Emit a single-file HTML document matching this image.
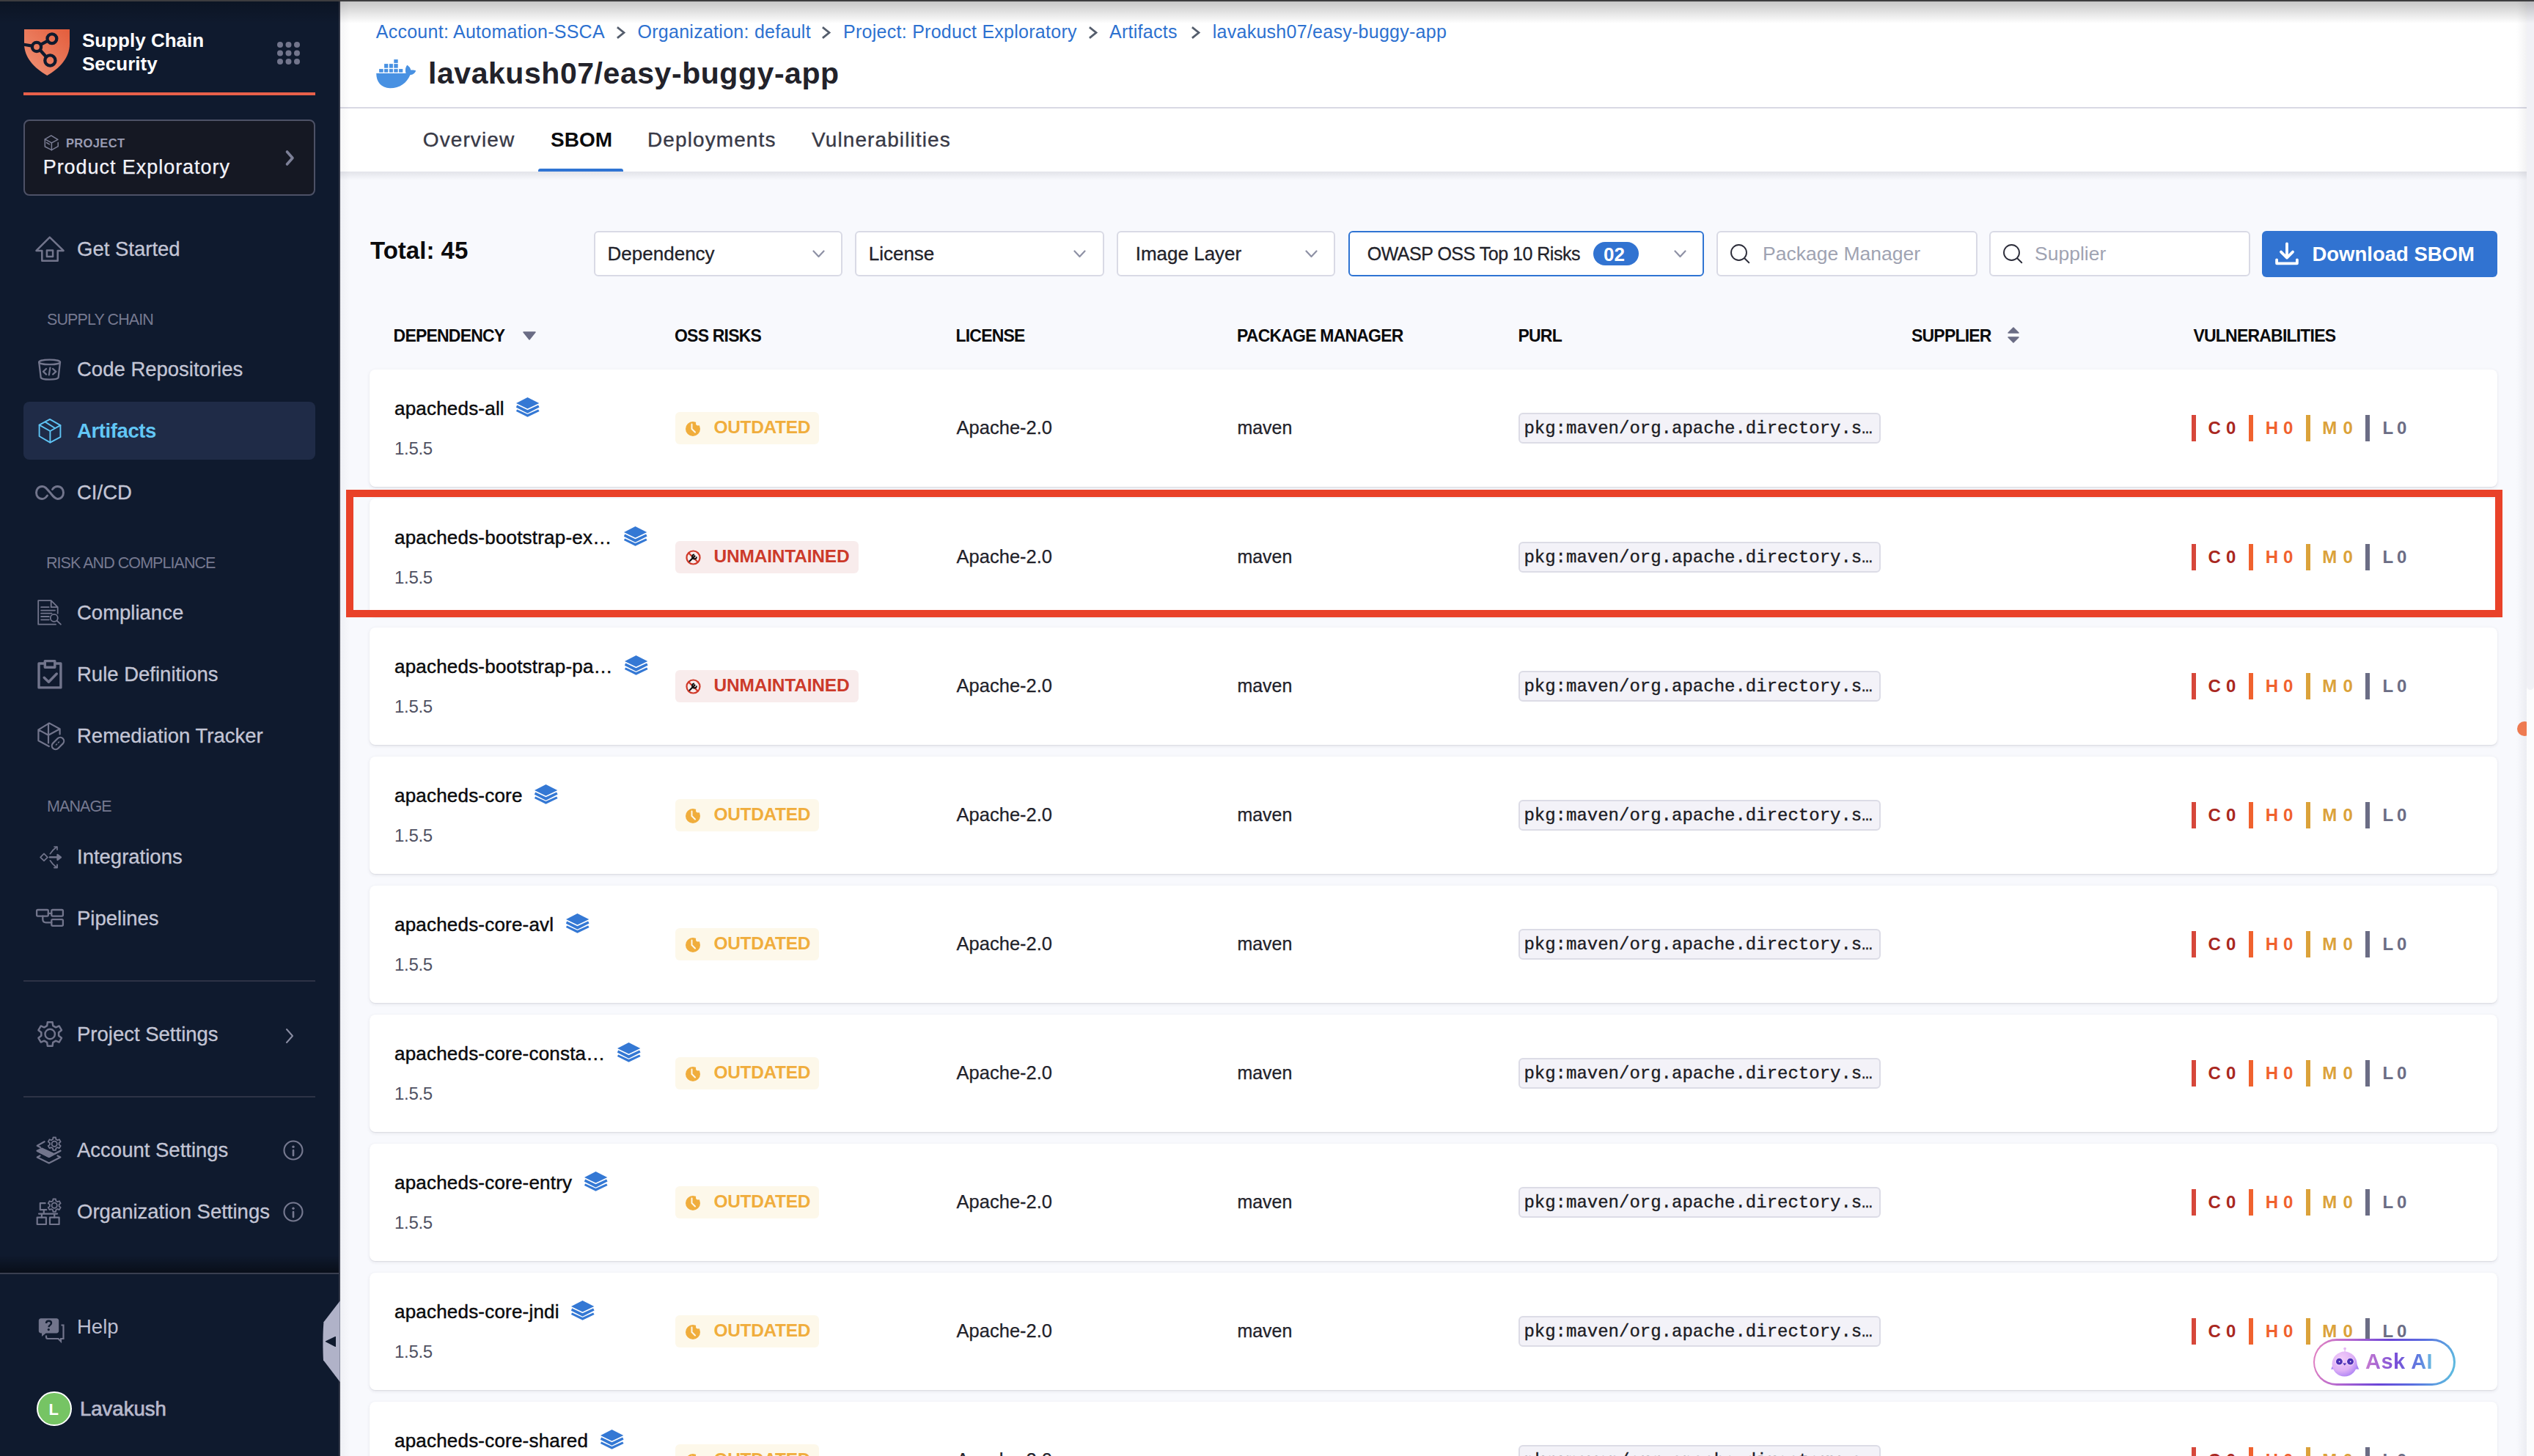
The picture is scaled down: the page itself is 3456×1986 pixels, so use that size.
<!DOCTYPE html><html><head><meta charset="utf-8"><title>SBOM</title><style>
html,body{margin:0;padding:0;width:3456px;height:1986px;overflow:hidden;background:#f8f9fd;}
.t{position:absolute;line-height:1;white-space:nowrap;}
.b{position:absolute;}
#root{position:relative;width:3456px;height:1986px;overflow:hidden;transform-origin:0 0;background:#f8f9fd;}
</style></head><body><div id="root">
<div class="b" style="left:464.0px;top:0.0px;width:2992.0px;height:1986.0px;background:#f8f9fd"></div>
<div class="b" style="left:464.0px;top:0.0px;width:2982.0px;height:234.0px;background:#ffffff"></div>
<div class="b" style="left:464.0px;top:146.0px;width:2982.0px;height:2.0px;background:#d9d9e4"></div>
<div class="b" style="left:464.0px;top:234.0px;width:2982.0px;height:12.0px;background:linear-gradient(to bottom, rgba(40,41,61,0.10), rgba(40,41,61,0))"></div>
<div class="t" style="left:512.7px;top:30.8px;font-size:25px;color:#2d71d0;font-weight:400;letter-spacing:0.27px;font-family:'Liberation Sans', sans-serif;">Account: Automation-SSCA</div>
<div class="t" style="left:869.5px;top:30.8px;font-size:25px;color:#2d71d0;font-weight:400;letter-spacing:0.27px;font-family:'Liberation Sans', sans-serif;">Organization: default</div>
<div class="t" style="left:1150.0px;top:30.8px;font-size:25px;color:#2d71d0;font-weight:400;letter-spacing:0.27px;font-family:'Liberation Sans', sans-serif;">Project: Product Exploratory</div>
<div class="t" style="left:1513.0px;top:30.8px;font-size:25px;color:#2d71d0;font-weight:400;letter-spacing:0.27px;font-family:'Liberation Sans', sans-serif;">Artifacts</div>
<div class="t" style="left:1653.7px;top:30.8px;font-size:25px;color:#2d71d0;font-weight:400;letter-spacing:0.27px;font-family:'Liberation Sans', sans-serif;">lavakush07/easy-buggy-app</div>
<svg class="b" style="left:841.3px;top:35.5px;" width="13" height="17" viewBox="0 0 13 17"><path d="M2 2 L10 8.5 L2 15" fill="none" stroke="#545d6c" stroke-width="2.8" stroke-linecap="square" stroke-linejoin="miter"/></svg>
<svg class="b" style="left:1121.3px;top:35.5px;" width="13" height="17" viewBox="0 0 13 17"><path d="M2 2 L10 8.5 L2 15" fill="none" stroke="#545d6c" stroke-width="2.8" stroke-linecap="square" stroke-linejoin="miter"/></svg>
<svg class="b" style="left:1485.0px;top:35.5px;" width="13" height="17" viewBox="0 0 13 17"><path d="M2 2 L10 8.5 L2 15" fill="none" stroke="#545d6c" stroke-width="2.8" stroke-linecap="square" stroke-linejoin="miter"/></svg>
<svg class="b" style="left:1625.3px;top:35.5px;" width="13" height="17" viewBox="0 0 13 17"><path d="M2 2 L10 8.5 L2 15" fill="none" stroke="#545d6c" stroke-width="2.8" stroke-linecap="square" stroke-linejoin="miter"/></svg>
<svg class="b" style="left:512.0px;top:80.0px;" width="56" height="42" viewBox="0 0 56 42">
<g fill="#4891e2">
<rect x="5.1" y="14.1" width="5.6" height="4.6"/><rect x="12.1" y="14.1" width="5.2" height="4.6"/><rect x="18.9" y="14.1" width="5" height="4.6"/><rect x="25.3" y="14.1" width="5.4" height="4.6"/><rect x="32.1" y="14.1" width="5.2" height="4.6"/>
<rect x="12.1" y="7.1" width="5.2" height="5.6"/><rect x="18.9" y="7.1" width="5" height="5.6"/><rect x="25.3" y="7.1" width="5.4" height="5.6"/>
<rect x="25.3" y="1.1" width="5.4" height="4.8"/>
<path d="M1.2 20.1 H41.6 C40.8 18 40.8 15 41.2 13.1 C41.8 11 42.5 9.8 43.4 8.8 C45.5 10.5 47.3 12 47.8 13.9 L48.2 15.6 C50.5 15.2 53.5 15.5 55.2 16.4 C54 19.5 51 22 47.4 22.2 C43 33 33 40.5 19.7 40.3 C8 40 1.2 32 1.2 20.1 Z"/>
</g></svg>
<div class="t" style="left:584.0px;top:79.6px;font-size:41px;color:#22222a;font-weight:700;letter-spacing:0.55px;font-family:'Liberation Sans', sans-serif;">lavakush07/easy-buggy-app</div>
<div class="t" style="left:576.8px;top:177.1px;font-size:28px;color:#383946;font-weight:400;letter-spacing:1.1px;font-family:'Liberation Sans', sans-serif;-webkit-text-stroke:0.35px #383946">Overview</div>
<div class="t" style="left:751.0px;top:177.1px;font-size:28px;color:#0b0b0d;font-weight:700;letter-spacing:0px;font-family:'Liberation Sans', sans-serif;">SBOM</div>
<div class="t" style="left:883.0px;top:177.1px;font-size:28px;color:#383946;font-weight:400;letter-spacing:1.1px;font-family:'Liberation Sans', sans-serif;-webkit-text-stroke:0.35px #383946">Deployments</div>
<div class="t" style="left:1107.0px;top:177.1px;font-size:28px;color:#383946;font-weight:400;letter-spacing:1.1px;font-family:'Liberation Sans', sans-serif;-webkit-text-stroke:0.35px #383946">Vulnerabilities</div>
<div class="b" style="left:734.0px;top:230.0px;width:116.0px;height:4.0px;background:#2f74d3;border-radius:3px 3px 0 0"></div>
<div class="b" style="left:464.0px;top:0.0px;width:14.0px;height:1986.0px;background:linear-gradient(to right, rgba(40,41,61,0.045), rgba(40,41,61,0))"></div>
<div class="t" style="left:505.0px;top:325.1px;font-size:33px;color:#0b0b0d;font-weight:700;letter-spacing:0px;font-family:'Liberation Sans', sans-serif;">Total: 45</div>
<div class="b" style="left:810.3px;top:314.5px;width:338.7px;height:62.5px;background:#fff;border:2px solid #d9dae5;border-radius:6px;box-sizing:border-box"></div>
<div class="t" style="left:828.6px;top:333.0px;font-size:26px;color:#22222a;font-weight:400;letter-spacing:0px;font-family:'Liberation Sans', sans-serif;-webkit-text-stroke:0.3px #22222a">Dependency</div>
<svg class="b" style="left:1108.0px;top:341.0px;" width="17" height="11" viewBox="0 0 17 11"><path d="M1.5 1.5 L8.5 9 L15.5 1.5" fill="none" stroke="#8e91a5" stroke-width="2.2" stroke-linecap="round" stroke-linejoin="round"/></svg>
<div class="b" style="left:1166.4px;top:314.5px;width:339.4px;height:62.5px;background:#fff;border:2px solid #d9dae5;border-radius:6px;box-sizing:border-box"></div>
<div class="t" style="left:1184.7px;top:333.0px;font-size:26px;color:#22222a;font-weight:400;letter-spacing:0px;font-family:'Liberation Sans', sans-serif;-webkit-text-stroke:0.3px #22222a">License</div>
<svg class="b" style="left:1463.5px;top:341.0px;" width="17" height="11" viewBox="0 0 17 11"><path d="M1.5 1.5 L8.5 9 L15.5 1.5" fill="none" stroke="#8e91a5" stroke-width="2.2" stroke-linecap="round" stroke-linejoin="round"/></svg>
<div class="b" style="left:1522.5px;top:314.5px;width:298.5px;height:62.5px;background:#fff;border:2px solid #d9dae5;border-radius:6px;box-sizing:border-box"></div>
<div class="t" style="left:1548.7px;top:333.0px;font-size:26px;color:#22222a;font-weight:400;letter-spacing:0px;font-family:'Liberation Sans', sans-serif;-webkit-text-stroke:0.3px #22222a">Image Layer</div>
<svg class="b" style="left:1780.0px;top:341.0px;" width="17" height="11" viewBox="0 0 17 11"><path d="M1.5 1.5 L8.5 9 L15.5 1.5" fill="none" stroke="#8e91a5" stroke-width="2.2" stroke-linecap="round" stroke-linejoin="round"/></svg>
<div class="b" style="left:1838.5px;top:314.5px;width:485.5px;height:62.5px;background:#fff;border:2.5px solid #2f74d3;border-radius:6px;box-sizing:border-box"></div>
<div class="t" style="left:1864.7px;top:333.8px;font-size:25px;color:#22222a;font-weight:400;letter-spacing:-0.49px;font-family:'Liberation Sans', sans-serif;-webkit-text-stroke:0.3px #22222a">OWASP OSS Top 10 Risks</div>
<svg class="b" style="left:2283.0px;top:341.0px;" width="17" height="11" viewBox="0 0 17 11"><path d="M1.5 1.5 L8.5 9 L15.5 1.5" fill="none" stroke="#8e91a5" stroke-width="2.2" stroke-linecap="round" stroke-linejoin="round"/></svg>
<div class="b" style="left:2173.0px;top:330.0px;width:61.7px;height:31.7px;background:#3173d1;border-radius:16px"></div>
<div class="t" style="left:2187.0px;top:333.5px;font-size:26px;color:#ffffff;font-weight:700;letter-spacing:0px;font-family:'Liberation Sans', sans-serif;">02</div>
<div class="b" style="left:2341.0px;top:314.5px;width:355.6px;height:62.5px;background:#fff;border:2px solid #d9dae5;border-radius:6px;box-sizing:border-box"></div>
<svg class="b" style="left:2359.0px;top:331.0px;" width="30" height="30" viewBox="0 0 30 30"><circle cx="12.5" cy="13.5" r="10.5" fill="none" stroke="#2c2d3a" stroke-width="1.9"/><path d="M20.2 21.3 L26.3 27.3" stroke="#2c2d3a" stroke-width="1.9" stroke-linecap="round"/></svg>
<div class="t" style="left:2404.0px;top:333.1px;font-size:26.5px;color:#9fa3b2;font-weight:400;letter-spacing:0px;font-family:'Liberation Sans', sans-serif;">Package Manager</div>
<div class="b" style="left:2713.0px;top:314.5px;width:355.5px;height:62.5px;background:#fff;border:2px solid #d9dae5;border-radius:6px;box-sizing:border-box"></div>
<svg class="b" style="left:2731.0px;top:331.0px;" width="30" height="30" viewBox="0 0 30 30"><circle cx="12.5" cy="13.5" r="10.5" fill="none" stroke="#2c2d3a" stroke-width="1.9"/><path d="M20.2 21.3 L26.3 27.3" stroke="#2c2d3a" stroke-width="1.9" stroke-linecap="round"/></svg>
<div class="t" style="left:2775.0px;top:333.1px;font-size:26.5px;color:#9fa3b2;font-weight:400;letter-spacing:0px;font-family:'Liberation Sans', sans-serif;">Supplier</div>
<div class="b" style="left:3084.5px;top:314.5px;width:321.3px;height:63.0px;background:#3173d1;border-radius:6px"></div>
<svg class="b" style="left:3102.0px;top:329.0px;" width="34" height="34" viewBox="0 0 34 34"><path d="M17 3.3 V22 M9 14.6 L17 22.6 L25 14.6" fill="none" stroke="#fff" stroke-width="3.8" stroke-linecap="round" stroke-linejoin="round"/><path d="M3.1 25.3 V30.3 H30.9 V25.3" fill="none" stroke="#fff" stroke-width="3.8" stroke-linecap="round" stroke-linejoin="round"/></svg>
<div class="t" style="left:3153.4px;top:332.7px;font-size:27.5px;color:#ffffff;font-weight:700;letter-spacing:0px;font-family:'Liberation Sans', sans-serif;">Download SBOM</div>
<div class="t" style="left:536.6px;top:446.8px;font-size:23px;color:#0b0b0d;font-weight:700;letter-spacing:-0.8px;font-family:'Liberation Sans', sans-serif;">DEPENDENCY</div>
<svg class="b" style="left:713.0px;top:452.0px;" width="18" height="12" viewBox="0 0 18 12"><path d="M1 1 H17 L9 11 Z" fill="#6b6d85" stroke="#6b6d85" stroke-width="1.5" stroke-linejoin="round"/></svg>
<div class="t" style="left:920.0px;top:446.8px;font-size:23px;color:#0b0b0d;font-weight:700;letter-spacing:-0.8px;font-family:'Liberation Sans', sans-serif;">OSS RISKS</div>
<div class="t" style="left:1303.5px;top:446.8px;font-size:23px;color:#0b0b0d;font-weight:700;letter-spacing:-0.8px;font-family:'Liberation Sans', sans-serif;">LICENSE</div>
<div class="t" style="left:1687.0px;top:446.8px;font-size:23px;color:#0b0b0d;font-weight:700;letter-spacing:-0.8px;font-family:'Liberation Sans', sans-serif;">PACKAGE MANAGER</div>
<div class="t" style="left:2070.5px;top:446.8px;font-size:23px;color:#0b0b0d;font-weight:700;letter-spacing:-0.8px;font-family:'Liberation Sans', sans-serif;">PURL</div>
<div class="t" style="left:2607.0px;top:446.8px;font-size:23px;color:#0b0b0d;font-weight:700;letter-spacing:-0.8px;font-family:'Liberation Sans', sans-serif;">SUPPLIER</div>
<svg class="b" style="left:2737.0px;top:445.0px;" width="18" height="24" viewBox="0 0 18 24"><path d="M2 9 L9 2 L16 9 Z M2 15 L9 22 L16 15 Z" fill="#6b6d85" stroke="#6b6d85" stroke-width="1.5" stroke-linejoin="round"/></svg>
<div class="t" style="left:2991.5px;top:446.8px;font-size:23px;color:#0b0b0d;font-weight:700;letter-spacing:-0.8px;font-family:'Liberation Sans', sans-serif;">VULNERABILITIES</div>
<div class="b" style="left:504.0px;top:504.0px;width:2902.0px;height:160.0px;background:#fff;border-radius:8px;box-shadow:0 1px 1px rgba(40,41,61,0.07),0 1.5px 4px rgba(40,41,61,0.09)"></div>
<div class="t" style="left:538.0px;top:542.3px;font-size:26px;color:#0b0b0d;font-weight:400;letter-spacing:0.2px;font-family:'Liberation Sans', sans-serif;-webkit-text-stroke:0.45px #0b0b0d">apacheds-all<svg width="32" height="27" viewBox="0 0 32 27" style="margin-left:16.5px;vertical-align:-3px"><g fill="#3478d4"><path d="M15.5 0 L31.3 7.9 L15.5 15.5 L0 7.9 Z"/><path d="M1.2 10.6 L15.5 17.2 L30.1 10.6 L31.6 13.6 L15.5 21.7 L-0.2 13.6 Z"/><path d="M1.2 16.6 L15.5 23 L30.1 16.6 L31.6 19 L15.5 26.8 L-0.2 19 Z"/></g></svg></div>
<div class="t" style="left:538.0px;top:599.7px;font-size:24px;color:#4f5162;font-weight:400;letter-spacing:-0.3px;font-family:'Liberation Sans', sans-serif;">1.5.5</div>
<div class="b" style="left:921.0px;top:562.0px;width:196.0px;height:43.8px;background:#fdf8ea;border-radius:6px"></div>
<svg class="b" style="left:934.0px;top:573.5px;" width="22" height="22" viewBox="0 0 22 22"><circle cx="11" cy="11" r="10" fill="#f0ad3c"/><path d="M9.5 4.5 V11 L14 15.5" fill="none" stroke="#fdf8ea" stroke-width="2" stroke-linecap="round"/><circle cx="18" cy="3.5" r="3" fill="#fdf8ea"/></svg>
<div class="t" style="left:973.5px;top:571.4px;font-size:24.5px;color:#f0ad3c;font-weight:700;letter-spacing:-0.35px;font-family:'Liberation Sans', sans-serif;">OUTDATED</div>
<div class="t" style="left:1304.6px;top:570.9px;font-size:25.5px;color:#22222a;font-weight:400;letter-spacing:0px;font-family:'Liberation Sans', sans-serif;-webkit-text-stroke:0.25px #22222a">Apache-2.0</div>
<div class="t" style="left:1687.4px;top:571.3px;font-size:25px;color:#22222a;font-weight:400;letter-spacing:0px;font-family:'Liberation Sans', sans-serif;-webkit-text-stroke:0.25px #22222a">maven</div>
<div class="b" style="left:2070.5px;top:562.7px;width:494.5px;height:42.6px;background:#f3f2f8;border:2px solid #dcdce6;border-radius:6px;box-sizing:border-box"></div>
<div class="t" style="left:2078.4px;top:573.2px;font-size:24px;color:#1c1c24;font-weight:400;letter-spacing:0px;font-family:'Liberation Mono', monospace;-webkit-text-stroke:0.35px #1c1c24">pkg:maven/org.apache.directory.s…</div>
<div class="b" style="left:2989.0px;top:566.0px;width:6.0px;height:35.7px;background:#d6473a"></div>
<div class="t" style="left:3011.5px;top:571.9px;font-size:24px;color:#a9281f;font-weight:700;letter-spacing:0px;font-family:'Liberation Sans', sans-serif;">C</div>
<div class="t" style="left:3036.0px;top:571.9px;font-size:24px;color:#a9281f;font-weight:700;letter-spacing:0px;font-family:'Liberation Sans', sans-serif;">0</div>
<div class="b" style="left:3067.0px;top:566.0px;width:6.0px;height:35.7px;background:#f0622e"></div>
<div class="t" style="left:3089.8px;top:571.9px;font-size:24px;color:#f0622e;font-weight:700;letter-spacing:0px;font-family:'Liberation Sans', sans-serif;">H</div>
<div class="t" style="left:3114.0px;top:571.9px;font-size:24px;color:#f0622e;font-weight:700;letter-spacing:0px;font-family:'Liberation Sans', sans-serif;">0</div>
<div class="b" style="left:3145.0px;top:566.0px;width:6.0px;height:35.7px;background:#dba23a"></div>
<div class="t" style="left:3167.2px;top:571.9px;font-size:24px;color:#dba23a;font-weight:700;letter-spacing:0px;font-family:'Liberation Sans', sans-serif;">M</div>
<div class="t" style="left:3195.5px;top:571.9px;font-size:24px;color:#dba23a;font-weight:700;letter-spacing:0px;font-family:'Liberation Sans', sans-serif;">0</div>
<div class="b" style="left:3226.0px;top:566.0px;width:6.0px;height:35.7px;background:#6b6d85"></div>
<div class="t" style="left:3249.5px;top:571.9px;font-size:24px;color:#6b6d85;font-weight:700;letter-spacing:0px;font-family:'Liberation Sans', sans-serif;">L</div>
<div class="t" style="left:3269.0px;top:571.9px;font-size:24px;color:#6b6d85;font-weight:700;letter-spacing:0px;font-family:'Liberation Sans', sans-serif;">0</div>
<div class="b" style="left:504.0px;top:680.0px;width:2902.0px;height:160.0px;background:#fff;border-radius:8px;box-shadow:0 1px 1px rgba(40,41,61,0.07),0 1.5px 4px rgba(40,41,61,0.09)"></div>
<div class="t" style="left:538.0px;top:718.3px;font-size:26px;color:#0b0b0d;font-weight:400;letter-spacing:0.2px;font-family:'Liberation Sans', sans-serif;-webkit-text-stroke:0.45px #0b0b0d">apacheds-bootstrap-ex…<svg width="32" height="27" viewBox="0 0 32 27" style="margin-left:16.5px;vertical-align:-3px"><g fill="#3478d4"><path d="M15.5 0 L31.3 7.9 L15.5 15.5 L0 7.9 Z"/><path d="M1.2 10.6 L15.5 17.2 L30.1 10.6 L31.6 13.6 L15.5 21.7 L-0.2 13.6 Z"/><path d="M1.2 16.6 L15.5 23 L30.1 16.6 L31.6 19 L15.5 26.8 L-0.2 19 Z"/></g></svg></div>
<div class="t" style="left:538.0px;top:775.7px;font-size:24px;color:#4f5162;font-weight:400;letter-spacing:-0.3px;font-family:'Liberation Sans', sans-serif;">1.5.5</div>
<div class="b" style="left:921.0px;top:738.0px;width:250.0px;height:43.8px;background:#f8ecec;border-radius:6px"></div>
<svg class="b" style="left:934.5px;top:749.5px;" width="21" height="21" viewBox="0 0 21 21"><circle cx="10.5" cy="10.5" r="9" fill="none" stroke="#d03a2a" stroke-width="2.2"/><path d="M4.2 4.2 L16.8 16.8" stroke="#d03a2a" stroke-width="2.2"/><path d="M5.5 15.5 L12.5 8.5" stroke="#111" stroke-width="2.2" stroke-linecap="round"/><path d="M12 6.5 A3 3 0 1 0 15 9.5" fill="none" stroke="#111" stroke-width="1.8"/></svg>
<div class="t" style="left:973.5px;top:747.4px;font-size:24.5px;color:#cc3a2a;font-weight:700;letter-spacing:-0.2px;font-family:'Liberation Sans', sans-serif;">UNMAINTAINED</div>
<div class="t" style="left:1304.6px;top:746.9px;font-size:25.5px;color:#22222a;font-weight:400;letter-spacing:0px;font-family:'Liberation Sans', sans-serif;-webkit-text-stroke:0.25px #22222a">Apache-2.0</div>
<div class="t" style="left:1687.4px;top:747.3px;font-size:25px;color:#22222a;font-weight:400;letter-spacing:0px;font-family:'Liberation Sans', sans-serif;-webkit-text-stroke:0.25px #22222a">maven</div>
<div class="b" style="left:2070.5px;top:738.7px;width:494.5px;height:42.6px;background:#f3f2f8;border:2px solid #dcdce6;border-radius:6px;box-sizing:border-box"></div>
<div class="t" style="left:2078.4px;top:749.2px;font-size:24px;color:#1c1c24;font-weight:400;letter-spacing:0px;font-family:'Liberation Mono', monospace;-webkit-text-stroke:0.35px #1c1c24">pkg:maven/org.apache.directory.s…</div>
<div class="b" style="left:2989.0px;top:742.0px;width:6.0px;height:35.7px;background:#d6473a"></div>
<div class="t" style="left:3011.5px;top:747.9px;font-size:24px;color:#a9281f;font-weight:700;letter-spacing:0px;font-family:'Liberation Sans', sans-serif;">C</div>
<div class="t" style="left:3036.0px;top:747.9px;font-size:24px;color:#a9281f;font-weight:700;letter-spacing:0px;font-family:'Liberation Sans', sans-serif;">0</div>
<div class="b" style="left:3067.0px;top:742.0px;width:6.0px;height:35.7px;background:#f0622e"></div>
<div class="t" style="left:3089.8px;top:747.9px;font-size:24px;color:#f0622e;font-weight:700;letter-spacing:0px;font-family:'Liberation Sans', sans-serif;">H</div>
<div class="t" style="left:3114.0px;top:747.9px;font-size:24px;color:#f0622e;font-weight:700;letter-spacing:0px;font-family:'Liberation Sans', sans-serif;">0</div>
<div class="b" style="left:3145.0px;top:742.0px;width:6.0px;height:35.7px;background:#dba23a"></div>
<div class="t" style="left:3167.2px;top:747.9px;font-size:24px;color:#dba23a;font-weight:700;letter-spacing:0px;font-family:'Liberation Sans', sans-serif;">M</div>
<div class="t" style="left:3195.5px;top:747.9px;font-size:24px;color:#dba23a;font-weight:700;letter-spacing:0px;font-family:'Liberation Sans', sans-serif;">0</div>
<div class="b" style="left:3226.0px;top:742.0px;width:6.0px;height:35.7px;background:#6b6d85"></div>
<div class="t" style="left:3249.5px;top:747.9px;font-size:24px;color:#6b6d85;font-weight:700;letter-spacing:0px;font-family:'Liberation Sans', sans-serif;">L</div>
<div class="t" style="left:3269.0px;top:747.9px;font-size:24px;color:#6b6d85;font-weight:700;letter-spacing:0px;font-family:'Liberation Sans', sans-serif;">0</div>
<div class="b" style="left:504.0px;top:856.0px;width:2902.0px;height:160.0px;background:#fff;border-radius:8px;box-shadow:0 1px 1px rgba(40,41,61,0.07),0 1.5px 4px rgba(40,41,61,0.09)"></div>
<div class="t" style="left:538.0px;top:894.3px;font-size:26px;color:#0b0b0d;font-weight:400;letter-spacing:0.2px;font-family:'Liberation Sans', sans-serif;-webkit-text-stroke:0.45px #0b0b0d">apacheds-bootstrap-pa…<svg width="32" height="27" viewBox="0 0 32 27" style="margin-left:16.5px;vertical-align:-3px"><g fill="#3478d4"><path d="M15.5 0 L31.3 7.9 L15.5 15.5 L0 7.9 Z"/><path d="M1.2 10.6 L15.5 17.2 L30.1 10.6 L31.6 13.6 L15.5 21.7 L-0.2 13.6 Z"/><path d="M1.2 16.6 L15.5 23 L30.1 16.6 L31.6 19 L15.5 26.8 L-0.2 19 Z"/></g></svg></div>
<div class="t" style="left:538.0px;top:951.7px;font-size:24px;color:#4f5162;font-weight:400;letter-spacing:-0.3px;font-family:'Liberation Sans', sans-serif;">1.5.5</div>
<div class="b" style="left:921.0px;top:914.0px;width:250.0px;height:43.8px;background:#f8ecec;border-radius:6px"></div>
<svg class="b" style="left:934.5px;top:925.5px;" width="21" height="21" viewBox="0 0 21 21"><circle cx="10.5" cy="10.5" r="9" fill="none" stroke="#d03a2a" stroke-width="2.2"/><path d="M4.2 4.2 L16.8 16.8" stroke="#d03a2a" stroke-width="2.2"/><path d="M5.5 15.5 L12.5 8.5" stroke="#111" stroke-width="2.2" stroke-linecap="round"/><path d="M12 6.5 A3 3 0 1 0 15 9.5" fill="none" stroke="#111" stroke-width="1.8"/></svg>
<div class="t" style="left:973.5px;top:923.4px;font-size:24.5px;color:#cc3a2a;font-weight:700;letter-spacing:-0.2px;font-family:'Liberation Sans', sans-serif;">UNMAINTAINED</div>
<div class="t" style="left:1304.6px;top:922.9px;font-size:25.5px;color:#22222a;font-weight:400;letter-spacing:0px;font-family:'Liberation Sans', sans-serif;-webkit-text-stroke:0.25px #22222a">Apache-2.0</div>
<div class="t" style="left:1687.4px;top:923.3px;font-size:25px;color:#22222a;font-weight:400;letter-spacing:0px;font-family:'Liberation Sans', sans-serif;-webkit-text-stroke:0.25px #22222a">maven</div>
<div class="b" style="left:2070.5px;top:914.7px;width:494.5px;height:42.6px;background:#f3f2f8;border:2px solid #dcdce6;border-radius:6px;box-sizing:border-box"></div>
<div class="t" style="left:2078.4px;top:925.2px;font-size:24px;color:#1c1c24;font-weight:400;letter-spacing:0px;font-family:'Liberation Mono', monospace;-webkit-text-stroke:0.35px #1c1c24">pkg:maven/org.apache.directory.s…</div>
<div class="b" style="left:2989.0px;top:918.0px;width:6.0px;height:35.7px;background:#d6473a"></div>
<div class="t" style="left:3011.5px;top:923.9px;font-size:24px;color:#a9281f;font-weight:700;letter-spacing:0px;font-family:'Liberation Sans', sans-serif;">C</div>
<div class="t" style="left:3036.0px;top:923.9px;font-size:24px;color:#a9281f;font-weight:700;letter-spacing:0px;font-family:'Liberation Sans', sans-serif;">0</div>
<div class="b" style="left:3067.0px;top:918.0px;width:6.0px;height:35.7px;background:#f0622e"></div>
<div class="t" style="left:3089.8px;top:923.9px;font-size:24px;color:#f0622e;font-weight:700;letter-spacing:0px;font-family:'Liberation Sans', sans-serif;">H</div>
<div class="t" style="left:3114.0px;top:923.9px;font-size:24px;color:#f0622e;font-weight:700;letter-spacing:0px;font-family:'Liberation Sans', sans-serif;">0</div>
<div class="b" style="left:3145.0px;top:918.0px;width:6.0px;height:35.7px;background:#dba23a"></div>
<div class="t" style="left:3167.2px;top:923.9px;font-size:24px;color:#dba23a;font-weight:700;letter-spacing:0px;font-family:'Liberation Sans', sans-serif;">M</div>
<div class="t" style="left:3195.5px;top:923.9px;font-size:24px;color:#dba23a;font-weight:700;letter-spacing:0px;font-family:'Liberation Sans', sans-serif;">0</div>
<div class="b" style="left:3226.0px;top:918.0px;width:6.0px;height:35.7px;background:#6b6d85"></div>
<div class="t" style="left:3249.5px;top:923.9px;font-size:24px;color:#6b6d85;font-weight:700;letter-spacing:0px;font-family:'Liberation Sans', sans-serif;">L</div>
<div class="t" style="left:3269.0px;top:923.9px;font-size:24px;color:#6b6d85;font-weight:700;letter-spacing:0px;font-family:'Liberation Sans', sans-serif;">0</div>
<div class="b" style="left:504.0px;top:1032.0px;width:2902.0px;height:160.0px;background:#fff;border-radius:8px;box-shadow:0 1px 1px rgba(40,41,61,0.07),0 1.5px 4px rgba(40,41,61,0.09)"></div>
<div class="t" style="left:538.0px;top:1070.3px;font-size:26px;color:#0b0b0d;font-weight:400;letter-spacing:0.2px;font-family:'Liberation Sans', sans-serif;-webkit-text-stroke:0.45px #0b0b0d">apacheds-core<svg width="32" height="27" viewBox="0 0 32 27" style="margin-left:16.5px;vertical-align:-3px"><g fill="#3478d4"><path d="M15.5 0 L31.3 7.9 L15.5 15.5 L0 7.9 Z"/><path d="M1.2 10.6 L15.5 17.2 L30.1 10.6 L31.6 13.6 L15.5 21.7 L-0.2 13.6 Z"/><path d="M1.2 16.6 L15.5 23 L30.1 16.6 L31.6 19 L15.5 26.8 L-0.2 19 Z"/></g></svg></div>
<div class="t" style="left:538.0px;top:1127.7px;font-size:24px;color:#4f5162;font-weight:400;letter-spacing:-0.3px;font-family:'Liberation Sans', sans-serif;">1.5.5</div>
<div class="b" style="left:921.0px;top:1090.0px;width:196.0px;height:43.8px;background:#fdf8ea;border-radius:6px"></div>
<svg class="b" style="left:934.0px;top:1101.5px;" width="22" height="22" viewBox="0 0 22 22"><circle cx="11" cy="11" r="10" fill="#f0ad3c"/><path d="M9.5 4.5 V11 L14 15.5" fill="none" stroke="#fdf8ea" stroke-width="2" stroke-linecap="round"/><circle cx="18" cy="3.5" r="3" fill="#fdf8ea"/></svg>
<div class="t" style="left:973.5px;top:1099.4px;font-size:24.5px;color:#f0ad3c;font-weight:700;letter-spacing:-0.35px;font-family:'Liberation Sans', sans-serif;">OUTDATED</div>
<div class="t" style="left:1304.6px;top:1098.9px;font-size:25.5px;color:#22222a;font-weight:400;letter-spacing:0px;font-family:'Liberation Sans', sans-serif;-webkit-text-stroke:0.25px #22222a">Apache-2.0</div>
<div class="t" style="left:1687.4px;top:1099.3px;font-size:25px;color:#22222a;font-weight:400;letter-spacing:0px;font-family:'Liberation Sans', sans-serif;-webkit-text-stroke:0.25px #22222a">maven</div>
<div class="b" style="left:2070.5px;top:1090.7px;width:494.5px;height:42.6px;background:#f3f2f8;border:2px solid #dcdce6;border-radius:6px;box-sizing:border-box"></div>
<div class="t" style="left:2078.4px;top:1101.2px;font-size:24px;color:#1c1c24;font-weight:400;letter-spacing:0px;font-family:'Liberation Mono', monospace;-webkit-text-stroke:0.35px #1c1c24">pkg:maven/org.apache.directory.s…</div>
<div class="b" style="left:2989.0px;top:1094.0px;width:6.0px;height:35.7px;background:#d6473a"></div>
<div class="t" style="left:3011.5px;top:1099.9px;font-size:24px;color:#a9281f;font-weight:700;letter-spacing:0px;font-family:'Liberation Sans', sans-serif;">C</div>
<div class="t" style="left:3036.0px;top:1099.9px;font-size:24px;color:#a9281f;font-weight:700;letter-spacing:0px;font-family:'Liberation Sans', sans-serif;">0</div>
<div class="b" style="left:3067.0px;top:1094.0px;width:6.0px;height:35.7px;background:#f0622e"></div>
<div class="t" style="left:3089.8px;top:1099.9px;font-size:24px;color:#f0622e;font-weight:700;letter-spacing:0px;font-family:'Liberation Sans', sans-serif;">H</div>
<div class="t" style="left:3114.0px;top:1099.9px;font-size:24px;color:#f0622e;font-weight:700;letter-spacing:0px;font-family:'Liberation Sans', sans-serif;">0</div>
<div class="b" style="left:3145.0px;top:1094.0px;width:6.0px;height:35.7px;background:#dba23a"></div>
<div class="t" style="left:3167.2px;top:1099.9px;font-size:24px;color:#dba23a;font-weight:700;letter-spacing:0px;font-family:'Liberation Sans', sans-serif;">M</div>
<div class="t" style="left:3195.5px;top:1099.9px;font-size:24px;color:#dba23a;font-weight:700;letter-spacing:0px;font-family:'Liberation Sans', sans-serif;">0</div>
<div class="b" style="left:3226.0px;top:1094.0px;width:6.0px;height:35.7px;background:#6b6d85"></div>
<div class="t" style="left:3249.5px;top:1099.9px;font-size:24px;color:#6b6d85;font-weight:700;letter-spacing:0px;font-family:'Liberation Sans', sans-serif;">L</div>
<div class="t" style="left:3269.0px;top:1099.9px;font-size:24px;color:#6b6d85;font-weight:700;letter-spacing:0px;font-family:'Liberation Sans', sans-serif;">0</div>
<div class="b" style="left:504.0px;top:1208.0px;width:2902.0px;height:160.0px;background:#fff;border-radius:8px;box-shadow:0 1px 1px rgba(40,41,61,0.07),0 1.5px 4px rgba(40,41,61,0.09)"></div>
<div class="t" style="left:538.0px;top:1246.3px;font-size:26px;color:#0b0b0d;font-weight:400;letter-spacing:0.2px;font-family:'Liberation Sans', sans-serif;-webkit-text-stroke:0.45px #0b0b0d">apacheds-core-avl<svg width="32" height="27" viewBox="0 0 32 27" style="margin-left:16.5px;vertical-align:-3px"><g fill="#3478d4"><path d="M15.5 0 L31.3 7.9 L15.5 15.5 L0 7.9 Z"/><path d="M1.2 10.6 L15.5 17.2 L30.1 10.6 L31.6 13.6 L15.5 21.7 L-0.2 13.6 Z"/><path d="M1.2 16.6 L15.5 23 L30.1 16.6 L31.6 19 L15.5 26.8 L-0.2 19 Z"/></g></svg></div>
<div class="t" style="left:538.0px;top:1303.7px;font-size:24px;color:#4f5162;font-weight:400;letter-spacing:-0.3px;font-family:'Liberation Sans', sans-serif;">1.5.5</div>
<div class="b" style="left:921.0px;top:1266.0px;width:196.0px;height:43.8px;background:#fdf8ea;border-radius:6px"></div>
<svg class="b" style="left:934.0px;top:1277.5px;" width="22" height="22" viewBox="0 0 22 22"><circle cx="11" cy="11" r="10" fill="#f0ad3c"/><path d="M9.5 4.5 V11 L14 15.5" fill="none" stroke="#fdf8ea" stroke-width="2" stroke-linecap="round"/><circle cx="18" cy="3.5" r="3" fill="#fdf8ea"/></svg>
<div class="t" style="left:973.5px;top:1275.4px;font-size:24.5px;color:#f0ad3c;font-weight:700;letter-spacing:-0.35px;font-family:'Liberation Sans', sans-serif;">OUTDATED</div>
<div class="t" style="left:1304.6px;top:1274.9px;font-size:25.5px;color:#22222a;font-weight:400;letter-spacing:0px;font-family:'Liberation Sans', sans-serif;-webkit-text-stroke:0.25px #22222a">Apache-2.0</div>
<div class="t" style="left:1687.4px;top:1275.3px;font-size:25px;color:#22222a;font-weight:400;letter-spacing:0px;font-family:'Liberation Sans', sans-serif;-webkit-text-stroke:0.25px #22222a">maven</div>
<div class="b" style="left:2070.5px;top:1266.7px;width:494.5px;height:42.6px;background:#f3f2f8;border:2px solid #dcdce6;border-radius:6px;box-sizing:border-box"></div>
<div class="t" style="left:2078.4px;top:1277.2px;font-size:24px;color:#1c1c24;font-weight:400;letter-spacing:0px;font-family:'Liberation Mono', monospace;-webkit-text-stroke:0.35px #1c1c24">pkg:maven/org.apache.directory.s…</div>
<div class="b" style="left:2989.0px;top:1270.0px;width:6.0px;height:35.7px;background:#d6473a"></div>
<div class="t" style="left:3011.5px;top:1275.9px;font-size:24px;color:#a9281f;font-weight:700;letter-spacing:0px;font-family:'Liberation Sans', sans-serif;">C</div>
<div class="t" style="left:3036.0px;top:1275.9px;font-size:24px;color:#a9281f;font-weight:700;letter-spacing:0px;font-family:'Liberation Sans', sans-serif;">0</div>
<div class="b" style="left:3067.0px;top:1270.0px;width:6.0px;height:35.7px;background:#f0622e"></div>
<div class="t" style="left:3089.8px;top:1275.9px;font-size:24px;color:#f0622e;font-weight:700;letter-spacing:0px;font-family:'Liberation Sans', sans-serif;">H</div>
<div class="t" style="left:3114.0px;top:1275.9px;font-size:24px;color:#f0622e;font-weight:700;letter-spacing:0px;font-family:'Liberation Sans', sans-serif;">0</div>
<div class="b" style="left:3145.0px;top:1270.0px;width:6.0px;height:35.7px;background:#dba23a"></div>
<div class="t" style="left:3167.2px;top:1275.9px;font-size:24px;color:#dba23a;font-weight:700;letter-spacing:0px;font-family:'Liberation Sans', sans-serif;">M</div>
<div class="t" style="left:3195.5px;top:1275.9px;font-size:24px;color:#dba23a;font-weight:700;letter-spacing:0px;font-family:'Liberation Sans', sans-serif;">0</div>
<div class="b" style="left:3226.0px;top:1270.0px;width:6.0px;height:35.7px;background:#6b6d85"></div>
<div class="t" style="left:3249.5px;top:1275.9px;font-size:24px;color:#6b6d85;font-weight:700;letter-spacing:0px;font-family:'Liberation Sans', sans-serif;">L</div>
<div class="t" style="left:3269.0px;top:1275.9px;font-size:24px;color:#6b6d85;font-weight:700;letter-spacing:0px;font-family:'Liberation Sans', sans-serif;">0</div>
<div class="b" style="left:504.0px;top:1384.0px;width:2902.0px;height:160.0px;background:#fff;border-radius:8px;box-shadow:0 1px 1px rgba(40,41,61,0.07),0 1.5px 4px rgba(40,41,61,0.09)"></div>
<div class="t" style="left:538.0px;top:1422.3px;font-size:26px;color:#0b0b0d;font-weight:400;letter-spacing:0.2px;font-family:'Liberation Sans', sans-serif;-webkit-text-stroke:0.45px #0b0b0d">apacheds-core-consta…<svg width="32" height="27" viewBox="0 0 32 27" style="margin-left:16.5px;vertical-align:-3px"><g fill="#3478d4"><path d="M15.5 0 L31.3 7.9 L15.5 15.5 L0 7.9 Z"/><path d="M1.2 10.6 L15.5 17.2 L30.1 10.6 L31.6 13.6 L15.5 21.7 L-0.2 13.6 Z"/><path d="M1.2 16.6 L15.5 23 L30.1 16.6 L31.6 19 L15.5 26.8 L-0.2 19 Z"/></g></svg></div>
<div class="t" style="left:538.0px;top:1479.7px;font-size:24px;color:#4f5162;font-weight:400;letter-spacing:-0.3px;font-family:'Liberation Sans', sans-serif;">1.5.5</div>
<div class="b" style="left:921.0px;top:1442.0px;width:196.0px;height:43.8px;background:#fdf8ea;border-radius:6px"></div>
<svg class="b" style="left:934.0px;top:1453.5px;" width="22" height="22" viewBox="0 0 22 22"><circle cx="11" cy="11" r="10" fill="#f0ad3c"/><path d="M9.5 4.5 V11 L14 15.5" fill="none" stroke="#fdf8ea" stroke-width="2" stroke-linecap="round"/><circle cx="18" cy="3.5" r="3" fill="#fdf8ea"/></svg>
<div class="t" style="left:973.5px;top:1451.4px;font-size:24.5px;color:#f0ad3c;font-weight:700;letter-spacing:-0.35px;font-family:'Liberation Sans', sans-serif;">OUTDATED</div>
<div class="t" style="left:1304.6px;top:1450.9px;font-size:25.5px;color:#22222a;font-weight:400;letter-spacing:0px;font-family:'Liberation Sans', sans-serif;-webkit-text-stroke:0.25px #22222a">Apache-2.0</div>
<div class="t" style="left:1687.4px;top:1451.3px;font-size:25px;color:#22222a;font-weight:400;letter-spacing:0px;font-family:'Liberation Sans', sans-serif;-webkit-text-stroke:0.25px #22222a">maven</div>
<div class="b" style="left:2070.5px;top:1442.7px;width:494.5px;height:42.6px;background:#f3f2f8;border:2px solid #dcdce6;border-radius:6px;box-sizing:border-box"></div>
<div class="t" style="left:2078.4px;top:1453.2px;font-size:24px;color:#1c1c24;font-weight:400;letter-spacing:0px;font-family:'Liberation Mono', monospace;-webkit-text-stroke:0.35px #1c1c24">pkg:maven/org.apache.directory.s…</div>
<div class="b" style="left:2989.0px;top:1446.0px;width:6.0px;height:35.7px;background:#d6473a"></div>
<div class="t" style="left:3011.5px;top:1451.9px;font-size:24px;color:#a9281f;font-weight:700;letter-spacing:0px;font-family:'Liberation Sans', sans-serif;">C</div>
<div class="t" style="left:3036.0px;top:1451.9px;font-size:24px;color:#a9281f;font-weight:700;letter-spacing:0px;font-family:'Liberation Sans', sans-serif;">0</div>
<div class="b" style="left:3067.0px;top:1446.0px;width:6.0px;height:35.7px;background:#f0622e"></div>
<div class="t" style="left:3089.8px;top:1451.9px;font-size:24px;color:#f0622e;font-weight:700;letter-spacing:0px;font-family:'Liberation Sans', sans-serif;">H</div>
<div class="t" style="left:3114.0px;top:1451.9px;font-size:24px;color:#f0622e;font-weight:700;letter-spacing:0px;font-family:'Liberation Sans', sans-serif;">0</div>
<div class="b" style="left:3145.0px;top:1446.0px;width:6.0px;height:35.7px;background:#dba23a"></div>
<div class="t" style="left:3167.2px;top:1451.9px;font-size:24px;color:#dba23a;font-weight:700;letter-spacing:0px;font-family:'Liberation Sans', sans-serif;">M</div>
<div class="t" style="left:3195.5px;top:1451.9px;font-size:24px;color:#dba23a;font-weight:700;letter-spacing:0px;font-family:'Liberation Sans', sans-serif;">0</div>
<div class="b" style="left:3226.0px;top:1446.0px;width:6.0px;height:35.7px;background:#6b6d85"></div>
<div class="t" style="left:3249.5px;top:1451.9px;font-size:24px;color:#6b6d85;font-weight:700;letter-spacing:0px;font-family:'Liberation Sans', sans-serif;">L</div>
<div class="t" style="left:3269.0px;top:1451.9px;font-size:24px;color:#6b6d85;font-weight:700;letter-spacing:0px;font-family:'Liberation Sans', sans-serif;">0</div>
<div class="b" style="left:504.0px;top:1560.0px;width:2902.0px;height:160.0px;background:#fff;border-radius:8px;box-shadow:0 1px 1px rgba(40,41,61,0.07),0 1.5px 4px rgba(40,41,61,0.09)"></div>
<div class="t" style="left:538.0px;top:1598.3px;font-size:26px;color:#0b0b0d;font-weight:400;letter-spacing:0.2px;font-family:'Liberation Sans', sans-serif;-webkit-text-stroke:0.45px #0b0b0d">apacheds-core-entry<svg width="32" height="27" viewBox="0 0 32 27" style="margin-left:16.5px;vertical-align:-3px"><g fill="#3478d4"><path d="M15.5 0 L31.3 7.9 L15.5 15.5 L0 7.9 Z"/><path d="M1.2 10.6 L15.5 17.2 L30.1 10.6 L31.6 13.6 L15.5 21.7 L-0.2 13.6 Z"/><path d="M1.2 16.6 L15.5 23 L30.1 16.6 L31.6 19 L15.5 26.8 L-0.2 19 Z"/></g></svg></div>
<div class="t" style="left:538.0px;top:1655.7px;font-size:24px;color:#4f5162;font-weight:400;letter-spacing:-0.3px;font-family:'Liberation Sans', sans-serif;">1.5.5</div>
<div class="b" style="left:921.0px;top:1618.0px;width:196.0px;height:43.8px;background:#fdf8ea;border-radius:6px"></div>
<svg class="b" style="left:934.0px;top:1629.5px;" width="22" height="22" viewBox="0 0 22 22"><circle cx="11" cy="11" r="10" fill="#f0ad3c"/><path d="M9.5 4.5 V11 L14 15.5" fill="none" stroke="#fdf8ea" stroke-width="2" stroke-linecap="round"/><circle cx="18" cy="3.5" r="3" fill="#fdf8ea"/></svg>
<div class="t" style="left:973.5px;top:1627.4px;font-size:24.5px;color:#f0ad3c;font-weight:700;letter-spacing:-0.35px;font-family:'Liberation Sans', sans-serif;">OUTDATED</div>
<div class="t" style="left:1304.6px;top:1626.9px;font-size:25.5px;color:#22222a;font-weight:400;letter-spacing:0px;font-family:'Liberation Sans', sans-serif;-webkit-text-stroke:0.25px #22222a">Apache-2.0</div>
<div class="t" style="left:1687.4px;top:1627.3px;font-size:25px;color:#22222a;font-weight:400;letter-spacing:0px;font-family:'Liberation Sans', sans-serif;-webkit-text-stroke:0.25px #22222a">maven</div>
<div class="b" style="left:2070.5px;top:1618.7px;width:494.5px;height:42.6px;background:#f3f2f8;border:2px solid #dcdce6;border-radius:6px;box-sizing:border-box"></div>
<div class="t" style="left:2078.4px;top:1629.2px;font-size:24px;color:#1c1c24;font-weight:400;letter-spacing:0px;font-family:'Liberation Mono', monospace;-webkit-text-stroke:0.35px #1c1c24">pkg:maven/org.apache.directory.s…</div>
<div class="b" style="left:2989.0px;top:1622.0px;width:6.0px;height:35.7px;background:#d6473a"></div>
<div class="t" style="left:3011.5px;top:1627.9px;font-size:24px;color:#a9281f;font-weight:700;letter-spacing:0px;font-family:'Liberation Sans', sans-serif;">C</div>
<div class="t" style="left:3036.0px;top:1627.9px;font-size:24px;color:#a9281f;font-weight:700;letter-spacing:0px;font-family:'Liberation Sans', sans-serif;">0</div>
<div class="b" style="left:3067.0px;top:1622.0px;width:6.0px;height:35.7px;background:#f0622e"></div>
<div class="t" style="left:3089.8px;top:1627.9px;font-size:24px;color:#f0622e;font-weight:700;letter-spacing:0px;font-family:'Liberation Sans', sans-serif;">H</div>
<div class="t" style="left:3114.0px;top:1627.9px;font-size:24px;color:#f0622e;font-weight:700;letter-spacing:0px;font-family:'Liberation Sans', sans-serif;">0</div>
<div class="b" style="left:3145.0px;top:1622.0px;width:6.0px;height:35.7px;background:#dba23a"></div>
<div class="t" style="left:3167.2px;top:1627.9px;font-size:24px;color:#dba23a;font-weight:700;letter-spacing:0px;font-family:'Liberation Sans', sans-serif;">M</div>
<div class="t" style="left:3195.5px;top:1627.9px;font-size:24px;color:#dba23a;font-weight:700;letter-spacing:0px;font-family:'Liberation Sans', sans-serif;">0</div>
<div class="b" style="left:3226.0px;top:1622.0px;width:6.0px;height:35.7px;background:#6b6d85"></div>
<div class="t" style="left:3249.5px;top:1627.9px;font-size:24px;color:#6b6d85;font-weight:700;letter-spacing:0px;font-family:'Liberation Sans', sans-serif;">L</div>
<div class="t" style="left:3269.0px;top:1627.9px;font-size:24px;color:#6b6d85;font-weight:700;letter-spacing:0px;font-family:'Liberation Sans', sans-serif;">0</div>
<div class="b" style="left:504.0px;top:1736.0px;width:2902.0px;height:160.0px;background:#fff;border-radius:8px;box-shadow:0 1px 1px rgba(40,41,61,0.07),0 1.5px 4px rgba(40,41,61,0.09)"></div>
<div class="t" style="left:538.0px;top:1774.3px;font-size:26px;color:#0b0b0d;font-weight:400;letter-spacing:0.2px;font-family:'Liberation Sans', sans-serif;-webkit-text-stroke:0.45px #0b0b0d">apacheds-core-jndi<svg width="32" height="27" viewBox="0 0 32 27" style="margin-left:16.5px;vertical-align:-3px"><g fill="#3478d4"><path d="M15.5 0 L31.3 7.9 L15.5 15.5 L0 7.9 Z"/><path d="M1.2 10.6 L15.5 17.2 L30.1 10.6 L31.6 13.6 L15.5 21.7 L-0.2 13.6 Z"/><path d="M1.2 16.6 L15.5 23 L30.1 16.6 L31.6 19 L15.5 26.8 L-0.2 19 Z"/></g></svg></div>
<div class="t" style="left:538.0px;top:1831.7px;font-size:24px;color:#4f5162;font-weight:400;letter-spacing:-0.3px;font-family:'Liberation Sans', sans-serif;">1.5.5</div>
<div class="b" style="left:921.0px;top:1794.0px;width:196.0px;height:43.8px;background:#fdf8ea;border-radius:6px"></div>
<svg class="b" style="left:934.0px;top:1805.5px;" width="22" height="22" viewBox="0 0 22 22"><circle cx="11" cy="11" r="10" fill="#f0ad3c"/><path d="M9.5 4.5 V11 L14 15.5" fill="none" stroke="#fdf8ea" stroke-width="2" stroke-linecap="round"/><circle cx="18" cy="3.5" r="3" fill="#fdf8ea"/></svg>
<div class="t" style="left:973.5px;top:1803.4px;font-size:24.5px;color:#f0ad3c;font-weight:700;letter-spacing:-0.35px;font-family:'Liberation Sans', sans-serif;">OUTDATED</div>
<div class="t" style="left:1304.6px;top:1802.9px;font-size:25.5px;color:#22222a;font-weight:400;letter-spacing:0px;font-family:'Liberation Sans', sans-serif;-webkit-text-stroke:0.25px #22222a">Apache-2.0</div>
<div class="t" style="left:1687.4px;top:1803.3px;font-size:25px;color:#22222a;font-weight:400;letter-spacing:0px;font-family:'Liberation Sans', sans-serif;-webkit-text-stroke:0.25px #22222a">maven</div>
<div class="b" style="left:2070.5px;top:1794.7px;width:494.5px;height:42.6px;background:#f3f2f8;border:2px solid #dcdce6;border-radius:6px;box-sizing:border-box"></div>
<div class="t" style="left:2078.4px;top:1805.2px;font-size:24px;color:#1c1c24;font-weight:400;letter-spacing:0px;font-family:'Liberation Mono', monospace;-webkit-text-stroke:0.35px #1c1c24">pkg:maven/org.apache.directory.s…</div>
<div class="b" style="left:2989.0px;top:1798.0px;width:6.0px;height:35.7px;background:#d6473a"></div>
<div class="t" style="left:3011.5px;top:1803.9px;font-size:24px;color:#a9281f;font-weight:700;letter-spacing:0px;font-family:'Liberation Sans', sans-serif;">C</div>
<div class="t" style="left:3036.0px;top:1803.9px;font-size:24px;color:#a9281f;font-weight:700;letter-spacing:0px;font-family:'Liberation Sans', sans-serif;">0</div>
<div class="b" style="left:3067.0px;top:1798.0px;width:6.0px;height:35.7px;background:#f0622e"></div>
<div class="t" style="left:3089.8px;top:1803.9px;font-size:24px;color:#f0622e;font-weight:700;letter-spacing:0px;font-family:'Liberation Sans', sans-serif;">H</div>
<div class="t" style="left:3114.0px;top:1803.9px;font-size:24px;color:#f0622e;font-weight:700;letter-spacing:0px;font-family:'Liberation Sans', sans-serif;">0</div>
<div class="b" style="left:3145.0px;top:1798.0px;width:6.0px;height:35.7px;background:#dba23a"></div>
<div class="t" style="left:3167.2px;top:1803.9px;font-size:24px;color:#dba23a;font-weight:700;letter-spacing:0px;font-family:'Liberation Sans', sans-serif;">M</div>
<div class="t" style="left:3195.5px;top:1803.9px;font-size:24px;color:#dba23a;font-weight:700;letter-spacing:0px;font-family:'Liberation Sans', sans-serif;">0</div>
<div class="b" style="left:3226.0px;top:1798.0px;width:6.0px;height:35.7px;background:#6b6d85"></div>
<div class="t" style="left:3249.5px;top:1803.9px;font-size:24px;color:#6b6d85;font-weight:700;letter-spacing:0px;font-family:'Liberation Sans', sans-serif;">L</div>
<div class="t" style="left:3269.0px;top:1803.9px;font-size:24px;color:#6b6d85;font-weight:700;letter-spacing:0px;font-family:'Liberation Sans', sans-serif;">0</div>
<div class="b" style="left:504.0px;top:1912.0px;width:2902.0px;height:160.0px;background:#fff;border-radius:8px;box-shadow:0 1px 1px rgba(40,41,61,0.07),0 1.5px 4px rgba(40,41,61,0.09)"></div>
<div class="t" style="left:538.0px;top:1950.3px;font-size:26px;color:#0b0b0d;font-weight:400;letter-spacing:0.2px;font-family:'Liberation Sans', sans-serif;-webkit-text-stroke:0.45px #0b0b0d">apacheds-core-shared<svg width="32" height="27" viewBox="0 0 32 27" style="margin-left:16.5px;vertical-align:-3px"><g fill="#3478d4"><path d="M15.5 0 L31.3 7.9 L15.5 15.5 L0 7.9 Z"/><path d="M1.2 10.6 L15.5 17.2 L30.1 10.6 L31.6 13.6 L15.5 21.7 L-0.2 13.6 Z"/><path d="M1.2 16.6 L15.5 23 L30.1 16.6 L31.6 19 L15.5 26.8 L-0.2 19 Z"/></g></svg></div>
<div class="t" style="left:538.0px;top:2007.7px;font-size:24px;color:#4f5162;font-weight:400;letter-spacing:-0.3px;font-family:'Liberation Sans', sans-serif;">1.5.5</div>
<div class="b" style="left:921.0px;top:1970.0px;width:196.0px;height:43.8px;background:#fdf8ea;border-radius:6px"></div>
<svg class="b" style="left:934.0px;top:1981.5px;" width="22" height="22" viewBox="0 0 22 22"><circle cx="11" cy="11" r="10" fill="#f0ad3c"/><path d="M9.5 4.5 V11 L14 15.5" fill="none" stroke="#fdf8ea" stroke-width="2" stroke-linecap="round"/><circle cx="18" cy="3.5" r="3" fill="#fdf8ea"/></svg>
<div class="t" style="left:973.5px;top:1979.4px;font-size:24.5px;color:#f0ad3c;font-weight:700;letter-spacing:-0.35px;font-family:'Liberation Sans', sans-serif;">OUTDATED</div>
<div class="t" style="left:1304.6px;top:1978.9px;font-size:25.5px;color:#22222a;font-weight:400;letter-spacing:0px;font-family:'Liberation Sans', sans-serif;-webkit-text-stroke:0.25px #22222a">Apache-2.0</div>
<div class="t" style="left:1687.4px;top:1979.3px;font-size:25px;color:#22222a;font-weight:400;letter-spacing:0px;font-family:'Liberation Sans', sans-serif;-webkit-text-stroke:0.25px #22222a">maven</div>
<div class="b" style="left:2070.5px;top:1970.7px;width:494.5px;height:42.6px;background:#f3f2f8;border:2px solid #dcdce6;border-radius:6px;box-sizing:border-box"></div>
<div class="t" style="left:2078.4px;top:1981.2px;font-size:24px;color:#1c1c24;font-weight:400;letter-spacing:0px;font-family:'Liberation Mono', monospace;-webkit-text-stroke:0.35px #1c1c24">pkg:maven/org.apache.directory.s…</div>
<div class="b" style="left:2989.0px;top:1974.0px;width:6.0px;height:35.7px;background:#d6473a"></div>
<div class="t" style="left:3011.5px;top:1979.9px;font-size:24px;color:#a9281f;font-weight:700;letter-spacing:0px;font-family:'Liberation Sans', sans-serif;">C</div>
<div class="t" style="left:3036.0px;top:1979.9px;font-size:24px;color:#a9281f;font-weight:700;letter-spacing:0px;font-family:'Liberation Sans', sans-serif;">0</div>
<div class="b" style="left:3067.0px;top:1974.0px;width:6.0px;height:35.7px;background:#f0622e"></div>
<div class="t" style="left:3089.8px;top:1979.9px;font-size:24px;color:#f0622e;font-weight:700;letter-spacing:0px;font-family:'Liberation Sans', sans-serif;">H</div>
<div class="t" style="left:3114.0px;top:1979.9px;font-size:24px;color:#f0622e;font-weight:700;letter-spacing:0px;font-family:'Liberation Sans', sans-serif;">0</div>
<div class="b" style="left:3145.0px;top:1974.0px;width:6.0px;height:35.7px;background:#dba23a"></div>
<div class="t" style="left:3167.2px;top:1979.9px;font-size:24px;color:#dba23a;font-weight:700;letter-spacing:0px;font-family:'Liberation Sans', sans-serif;">M</div>
<div class="t" style="left:3195.5px;top:1979.9px;font-size:24px;color:#dba23a;font-weight:700;letter-spacing:0px;font-family:'Liberation Sans', sans-serif;">0</div>
<div class="b" style="left:3226.0px;top:1974.0px;width:6.0px;height:35.7px;background:#6b6d85"></div>
<div class="t" style="left:3249.5px;top:1979.9px;font-size:24px;color:#6b6d85;font-weight:700;letter-spacing:0px;font-family:'Liberation Sans', sans-serif;">L</div>
<div class="t" style="left:3269.0px;top:1979.9px;font-size:24px;color:#6b6d85;font-weight:700;letter-spacing:0px;font-family:'Liberation Sans', sans-serif;">0</div>
<div class="b" style="left:472.0px;top:668.0px;width:2941.0px;height:174.0px;border:10px solid #e94229;box-sizing:border-box"></div>
<div class="b" style="left:3432.0px;top:0.0px;width:14.0px;height:1986.0px;background:linear-gradient(to right, rgba(40,41,61,0), rgba(40,41,61,0.06))"></div>
<div class="b" style="left:3446.0px;top:0.0px;width:10.0px;height:1986.0px;background:#fcfcfd"></div>
<div class="b" style="left:3446.0px;top:0.0px;width:10.0px;height:941.0px;background:#f1f1f6;border-radius:0 0 6px 6px"></div>
<div class="b" style="left:3446px;top:0;width:12px;height:1986px;overflow:hidden"></div>
<div class="b" style="left:3433px;top:984px;width:13px;height:20px;overflow:hidden"><div style="width:20px;height:20px;border-radius:50%;background:#ee7a50"></div></div>
<div class="b" style="left:3154.5px;top:1826px;width:194px;height:64px;border-radius:32px;background:linear-gradient(105deg,#e885c0 0%,#b066d0 25%,#6a45d8 50%,#5a6ee0 72%,#5ec6df 100%);"></div>
<div class="b" style="left:3157.0px;top:1828.5px;width:189.2px;height:58.6px;background:#fff;border-radius:30px"></div>
<svg class="b" style="left:3178.0px;top:1837.0px;" width="42" height="42" viewBox="0 0 42 42"><defs><radialGradient id="bg1" cx="0.38" cy="0.3" r="0.85"><stop offset="0" stop-color="#f3cdf9"/><stop offset="0.55" stop-color="#deb0f6"/><stop offset="1" stop-color="#9a72f4"/></radialGradient></defs><circle cx="20.1" cy="2.6" r="1.9" fill="#e7b8f5"/><path d="M20.1 3 V8" stroke="#e7b8f5" stroke-width="1.3"/><path d="M4.5 22.5 L1.2 30.8 L6 30.5 Z M35.8 22.5 L39.3 30.8 L34.5 30.5 Z" fill="#a983f5"/><circle cx="19.6" cy="23.6" r="17" fill="url(#bg1)"/><circle cx="12.4" cy="20.2" r="5.2" fill="#f6e3fb"/><circle cx="27.5" cy="20.2" r="5.2" fill="#f6e3fb"/><circle cx="12.4" cy="20.2" r="4.4" fill="#4d30b6"/><circle cx="27.5" cy="20.2" r="4.4" fill="#4d30b6"/><circle cx="12.6" cy="20.3" r="0.9" fill="#fff"/><circle cx="27.7" cy="20.3" r="0.9" fill="#fff"/><path d="M17.1 22.5 H22.2 L19.8 25.5 Z" fill="#4d30b6"/></svg>
<div class="t" style="left:3226px;top:1843.4px;font-size:29px;font-weight:700;font-family:'Liberation Sans', sans-serif;background:linear-gradient(90deg,#c77ad0,#7a4fd8 45%,#5e7de0 80%,#6bc0e0);-webkit-background-clip:text;background-clip:text;color:transparent;letter-spacing:0.5px">Ask AI</div>
<div class="b" style="left:0.0px;top:0.0px;width:462.0px;height:1986.0px;background:#0f1a2e"></div>
<div class="b" style="left:462.0px;top:0.0px;width:2.0px;height:1986.0px;background:#353a4a"></div>
<svg class="b" style="left:25.0px;top:30.0px;" width="80" height="80" viewBox="0 0 80 80"><defs><linearGradient id="lg1" x1="0" y1="1" x2="1" y2="0"><stop offset="0" stop-color="#f09478"/><stop offset="1" stop-color="#e35d3c"/></linearGradient></defs>
<path d="M8 10 L70 10 L70 30 C70 48 57 63 39.3 73 C21.5 63 8 48 8 30 Z" fill="url(#lg1)"/>
<g fill="none" stroke="#0f1a2e" stroke-width="4.3"><circle cx="45.9" cy="22.8" r="6.4"/><circle cx="25" cy="34" r="6.1"/><circle cx="43.4" cy="52.5" r="7.1"/>
<path d="M6 30.5 L18.8 32.6 M30.5 30.9 L40.2 25.6 M29.6 38.2 L38 47.5"/></g></svg>
<div class="t" style="left:112.0px;top:42.4px;font-size:26px;color:#ffffff;font-weight:700;letter-spacing:0px;font-family:'Liberation Sans', sans-serif;">Supply Chain</div>
<div class="t" style="left:112.0px;top:74.2px;font-size:26px;color:#ffffff;font-weight:700;letter-spacing:0px;font-family:'Liberation Sans', sans-serif;">Security</div>
<svg class="b" style="left:377.5px;top:56.5px;" width="32" height="32" viewBox="0 0 32 32"><circle cx="4.0" cy="4.0" r="4" fill="#72758c"/><circle cx="4.0" cy="15.5" r="4" fill="#72758c"/><circle cx="4.0" cy="27.0" r="4" fill="#72758c"/><circle cx="15.5" cy="4.0" r="4" fill="#72758c"/><circle cx="15.5" cy="15.5" r="4" fill="#72758c"/><circle cx="15.5" cy="27.0" r="4" fill="#72758c"/><circle cx="27.0" cy="4.0" r="4" fill="#72758c"/><circle cx="27.0" cy="15.5" r="4" fill="#72758c"/><circle cx="27.0" cy="27.0" r="4" fill="#72758c"/></svg>
<div class="b" style="left:32.0px;top:126.0px;width:398.0px;height:4.0px;background:#e8604a"></div>
<div class="b" style="left:32.0px;top:162.5px;width:398.0px;height:104.5px;background:#151823;border:2px solid #4d5166;border-radius:8px;box-sizing:border-box"></div>
<svg class="b" style="left:55.0px;top:175.0px;" width="40" height="40" viewBox="0 0 40 40"><g fill="none" stroke="#7b7e95" stroke-width="1.5" stroke-linejoin="round" stroke-linecap="round"><path d="M14.8 9.9 L23.9 15.4 L15.4 19.8 L6.3 14.8 Z"/><path d="M6.3 14.8 V25 L15.4 29.7 L24.2 24.7 V19.5"/><path d="M15.4 19.8 V29.7"/><path d="M8.5 19.5 L12.4 21.8"/></g></svg>
<div class="t" style="left:90.0px;top:187.0px;font-size:16.5px;color:#9a9cb3;font-weight:700;letter-spacing:0.35px;font-family:'Liberation Sans', sans-serif;">PROJECT</div>
<div class="t" style="left:58.7px;top:215.0px;font-size:27px;color:#f3f3fa;font-weight:400;letter-spacing:0.95px;font-family:'Liberation Sans', sans-serif;-webkit-text-stroke:0.25px #f3f3fa">Product Exploratory</div>
<svg class="b" style="left:386.0px;top:202.0px;" width="18" height="26" viewBox="0 0 18 26"><path d="M5.5 5 L13 13.5 L5.5 22" fill="none" stroke="#7d8098" stroke-width="3.6" stroke-linecap="round" stroke-linejoin="round"/></svg>
<svg class="b" style="left:40.0px;top:310.0px;" width="60" height="60" viewBox="0 0 60 60"><g fill="none" stroke="#72758c" stroke-width="2.5" stroke-linejoin="round" stroke-linecap="round"><path d="M17.3 45.7 V31.9 H9.5 L27.8 13.6 L46.6 31.9 H38.7 V45.7 Z"/><rect x="23.9" y="31.5" width="8.2" height="8.5"/></g></svg>
<div class="t" style="left:105.0px;top:325.7px;font-size:27.5px;color:#c3c5d5;font-weight:400;letter-spacing:0px;font-family:'Liberation Sans', sans-serif;-webkit-text-stroke:0.3px #c3c5d5">Get Started</div>
<div class="t" style="left:64.0px;top:426.3px;font-size:21.5px;color:#767990;font-weight:400;letter-spacing:-0.9px;font-family:'Liberation Sans', sans-serif;">SUPPLY CHAIN</div>
<svg class="b" style="left:40.0px;top:470.0px;" width="60" height="60" viewBox="0 0 60 60"><g fill="none" stroke="#72758c" stroke-width="2.3" stroke-linejoin="round" stroke-linecap="round"><ellipse cx="27.6" cy="23.9" rx="14.4" ry="3.3"/><path d="M13.2 23.9 L15.7 45 C17 48.5 38 48.5 39.6 45 L42 23.9"/><path d="M23 33 L19 36.8 L23 40.6 M28.4 31.7 L26.8 41.4 M32.1 33 L36.3 36.8 L32.1 40.6"/></g></svg>
<div class="t" style="left:105.0px;top:489.7px;font-size:27.5px;color:#c3c5d5;font-weight:400;letter-spacing:0px;font-family:'Liberation Sans', sans-serif;-webkit-text-stroke:0.3px #c3c5d5">Code Repositories</div>
<div class="b" style="left:32.0px;top:548.0px;width:398.0px;height:79.0px;background:#1f2b47;border-radius:8px"></div>
<svg class="b" style="left:40.0px;top:555.0px;" width="60" height="60" viewBox="0 0 60 60"><g fill="none" stroke="#5fc4f4" stroke-width="1.9" stroke-linejoin="round" stroke-linecap="round"><path d="M28 16.9 L42.4 25.1 V41.2 L28.4 48.6 L13.6 40 V24.7 Z"/><path d="M13.6 24.7 L28.4 33 L42.4 25.1 M28.4 33 V48.6 M21.8 20.6 L35 29"/></g></svg>
<div class="t" style="left:105.0px;top:573.7px;font-size:27.5px;color:#62c7f6;font-weight:700;letter-spacing:-0.4px;font-family:'Liberation Sans', sans-serif;">Artifacts</div>
<svg class="b" style="left:40.0px;top:640.0px;" width="60" height="60" viewBox="0 0 60 60"><g fill="none" stroke="#72758c" stroke-width="2.9" stroke-linejoin="round" stroke-linecap="round"><path d="M24.5 36 C22 39.5 19.5 40.5 17.5 40.5 C12.5 40.5 9.5 36.5 9.5 32 C9.5 27.5 12.5 23.5 17.5 23.5 C21 23.5 23 25.5 28 31.5 C33 37.5 35 40.5 38.5 40.5 C43.5 40.5 46.5 36.5 46.5 32 C46.5 27.5 43.5 23.5 38.5 23.5 C36 23.5 33.5 24.5 31.5 27.5"/></g></svg>
<div class="t" style="left:105.0px;top:658.3px;font-size:27.5px;color:#c3c5d5;font-weight:400;letter-spacing:0px;font-family:'Liberation Sans', sans-serif;-webkit-text-stroke:0.3px #c3c5d5">CI/CD</div>
<div class="t" style="left:63.0px;top:758.1px;font-size:21.5px;color:#767990;font-weight:400;letter-spacing:-0.95px;font-family:'Liberation Sans', sans-serif;">RISK AND COMPLIANCE</div>
<svg class="b" style="left:40.0px;top:806.0px;" width="60" height="60" viewBox="0 0 60 60"><g fill="none" stroke="#72758c" stroke-width="1.8" stroke-linejoin="round" stroke-linecap="round"><path d="M36 45.7 H12.2 V13.2 H29.7 L38.7 22.2 V30.7 M29.7 13.2 V22.2 H38.7"/><path d="M16.1 22.2 H26.6 M16.1 26.6 H35 M16.1 30.7 H30.5 M16.1 35 H26.8 M16.1 39.3 H26.8"/><circle cx="33.8" cy="36.9" r="5"/><path d="M37.5 40.5 L42.9 45.7"/></g></svg>
<div class="t" style="left:105.0px;top:822.2px;font-size:27.5px;color:#c3c5d5;font-weight:400;letter-spacing:0px;font-family:'Liberation Sans', sans-serif;-webkit-text-stroke:0.3px #c3c5d5">Compliance</div>
<svg class="b" style="left:40.0px;top:890.0px;" width="60" height="60" viewBox="0 0 60 60"><g fill="none" stroke="#72758c" stroke-width="3.4" stroke-linejoin="round" stroke-linecap="round"><path d="M19.8 15 H13 V47.9 H42.9 V15 H36.3"/><rect x="21.3" y="11.6" width="13.5" height="8.7"/><path d="M20.2 34.2 L26.4 40.2 L37.3 29"/></g></svg>
<div class="t" style="left:105.0px;top:906.3px;font-size:27.5px;color:#c3c5d5;font-weight:400;letter-spacing:0px;font-family:'Liberation Sans', sans-serif;-webkit-text-stroke:0.3px #c3c5d5">Rule Definitions</div>
<svg class="b" style="left:40.0px;top:974.0px;" width="60" height="60" viewBox="0 0 60 60"><g fill="none" stroke="#72758c" stroke-width="2.2" stroke-linejoin="round" stroke-linecap="round"><path d="M41.6 27.5 V20.2 L27.2 12.4 L12.4 21.4 V36.3 L26.8 44 M12.4 21.4 L26 28.8 L41.6 20.2 M26 12.8 V26.5 M26 28.8 V39.5"/><rect x="29.5" y="35" width="19" height="10" rx="5" transform="rotate(-45 39 40)"/><path d="M36.5 42 L37.5 41 M39.5 39 L40.5 38" stroke-width="1.6"/></g></svg>
<div class="t" style="left:105.0px;top:990.3px;font-size:27.5px;color:#c3c5d5;font-weight:400;letter-spacing:0px;font-family:'Liberation Sans', sans-serif;-webkit-text-stroke:0.3px #c3c5d5">Remediation Tracker</div>
<div class="t" style="left:64.0px;top:1089.8px;font-size:21.5px;color:#767990;font-weight:400;letter-spacing:-0.9px;font-family:'Liberation Sans', sans-serif;">MANAGE</div>
<svg class="b" style="left:40.0px;top:1138.0px;" width="60" height="60" viewBox="0 0 60 60"><g fill="none" stroke="#72758c" stroke-width="2.3" stroke-linejoin="round" stroke-linecap="round"><path d="M20 26.4 L24.9 31.3 L20 36.2 L15.1 31.3 Z" stroke-width="1.7"/><path d="M28 31.3 H41" stroke-width="2.6"/><path d="M38.5 27.8 L43 31.3 L38.5 34.8 Z" fill="#72758c"/><path d="M28.4 26.6 C31 22.5 33.5 20 37 17.5" stroke-width="1.7"/><path d="M34 17 H38 V21" stroke-width="1.7"/><path d="M28.4 35.8 C31 40 33.5 42.5 37 45" stroke-width="1.7"/><path d="M34 45.5 H38 V41.5" stroke-width="1.9"/></g></svg>
<div class="t" style="left:105.0px;top:1155.2px;font-size:27.5px;color:#c3c5d5;font-weight:400;letter-spacing:0px;font-family:'Liberation Sans', sans-serif;-webkit-text-stroke:0.3px #c3c5d5">Integrations</div>
<svg class="b" style="left:40.0px;top:1222.0px;" width="60" height="60" viewBox="0 0 60 60"><g fill="none" stroke="#72758c" stroke-width="2.3" stroke-linejoin="round" stroke-linecap="round"><rect x="10.1" y="19" width="15.7" height="8.6" rx="1.5"/><rect x="30.3" y="19" width="15.6" height="8.6" rx="1.5"/><rect x="30.3" y="32.1" width="15.6" height="8.7" rx="1.5"/><path d="M25.8 23.9 H30.3 M18.3 27.6 V32 C18.3 34.5 20 36.3 22.5 36.3 H30.3"/></g></svg>
<div class="t" style="left:105.0px;top:1239.3px;font-size:27.5px;color:#c3c5d5;font-weight:400;letter-spacing:0px;font-family:'Liberation Sans', sans-serif;-webkit-text-stroke:0.3px #c3c5d5">Pipelines</div>
<div class="b" style="left:32.0px;top:1337.0px;width:398.0px;height:2.0px;background:#2d3346"></div>
<svg class="b" style="left:40.0px;top:1380.0px;" width="60" height="60" viewBox="0 0 60 60"><g fill="none" stroke="#72758c" stroke-width="2.2" stroke-linejoin="round" stroke-linecap="round"><g transform="translate(28.2 30.5) scale(1.12) translate(-28.2 -29)"><path d="M25.2 14.5 H31.2 L31.8 18.8 L35.3 20.8 L39.3 19.1 L42.3 24.3 L38.8 27 V31 L42.3 33.7 L39.3 38.9 L35.3 37.2 L31.8 39.2 L31.2 43.5 H25.2 L24.6 39.2 L21.1 37.2 L17.1 38.9 L14.1 33.7 L17.6 31 V27 L14.1 24.3 L17.1 19.1 L21.1 20.8 L24.6 18.8 Z"/><circle cx="28.2" cy="29" r="6"/></g></g></svg>
<div class="t" style="left:105.0px;top:1396.7px;font-size:27.5px;color:#c3c5d5;font-weight:400;letter-spacing:0px;font-family:'Liberation Sans', sans-serif;-webkit-text-stroke:0.3px #c3c5d5">Project Settings</div>
<svg class="b" style="left:386.0px;top:1400.0px;" width="18" height="26" viewBox="0 0 18 26"><path d="M5 4 L13 13 L5 22" fill="none" stroke="#8a8da3" stroke-width="2" stroke-linecap="round" stroke-linejoin="round"/></svg>
<div class="b" style="left:32.0px;top:1495.0px;width:398.0px;height:2.0px;background:#2d3346"></div>
<svg class="b" style="left:40.0px;top:1538.0px;" width="60" height="60" viewBox="0 0 60 60"><g fill="none" stroke="#72758c" stroke-width="2.2" stroke-linejoin="round" stroke-linecap="round"><path d="M20.6 19.2 L10.7 24.7 L15 27"/><path d="M10.7 31.7 L26.8 40 L42.4 31.7" stroke-width="2.2"/><path d="M10.7 31.7 L17 28.5 L33.5 36 L26.8 40 Z" fill="#72758c"/><path d="M42.4 31.7 L35 35.5"/><path d="M14.5 38.5 L10.7 40.5 L26.8 48.5 L42.4 40.5 L38.5 38.5"/><g stroke-width="3"><g transform="translate(34.2 22.2) scale(0.6) translate(-28.2 -29)"><path d="M25.2 14.5 H31.2 L31.8 18.8 L35.3 20.8 L39.3 19.1 L42.3 24.3 L38.8 27 V31 L42.3 33.7 L39.3 38.9 L35.3 37.2 L31.8 39.2 L31.2 43.5 H25.2 L24.6 39.2 L21.1 37.2 L17.1 38.9 L14.1 33.7 L17.6 31 V27 L14.1 24.3 L17.1 19.1 L21.1 20.8 L24.6 18.8 Z"/><circle cx="28.2" cy="29" r="6"/></g></g></g></svg>
<div class="t" style="left:105.0px;top:1555.2px;font-size:27.5px;color:#c3c5d5;font-weight:400;letter-spacing:0px;font-family:'Liberation Sans', sans-serif;-webkit-text-stroke:0.3px #c3c5d5">Account Settings</div>
<svg class="b" style="left:386.0px;top:1554.5px;" width="28" height="28" viewBox="0 0 28 28"><circle cx="14" cy="14" r="12.5" fill="none" stroke="#767990" stroke-width="2.1"/><path d="M14 14 V21" stroke="#767990" stroke-width="2.6" stroke-linecap="round"/><circle cx="14" cy="9.2" r="1.7" fill="#767990"/></svg>
<svg class="b" style="left:40.0px;top:1622.0px;" width="60" height="60" viewBox="0 0 60 60"><g fill="none" stroke="#72758c" stroke-width="2.2" stroke-linejoin="round" stroke-linecap="round"><path d="M21.6 19.2 H14.8 V28.2 H23.3 M19.8 28.2 V33.6 M13 33.6 H38.1 M16.9 33.6 V38.7 M34.2 33.6 V38.7"/><rect x="10.7" y="38.7" width="12.2" height="9.3"/><rect x="28" y="38.7" width="12.6" height="9.3"/><g stroke-width="3"><g transform="translate(34.2 22.2) scale(0.6) translate(-28.2 -29)"><path d="M25.2 14.5 H31.2 L31.8 18.8 L35.3 20.8 L39.3 19.1 L42.3 24.3 L38.8 27 V31 L42.3 33.7 L39.3 38.9 L35.3 37.2 L31.8 39.2 L31.2 43.5 H25.2 L24.6 39.2 L21.1 37.2 L17.1 38.9 L14.1 33.7 L17.6 31 V27 L14.1 24.3 L17.1 19.1 L21.1 20.8 L24.6 18.8 Z"/><circle cx="28.2" cy="29" r="6"/></g></g></g></svg>
<div class="t" style="left:105.0px;top:1639.3px;font-size:27.5px;color:#c3c5d5;font-weight:400;letter-spacing:0px;font-family:'Liberation Sans', sans-serif;-webkit-text-stroke:0.3px #c3c5d5">Organization Settings</div>
<svg class="b" style="left:386.0px;top:1638.5px;" width="28" height="28" viewBox="0 0 28 28"><circle cx="14" cy="14" r="12.5" fill="none" stroke="#767990" stroke-width="2.1"/><path d="M14 14 V21" stroke="#767990" stroke-width="2.6" stroke-linecap="round"/><circle cx="14" cy="9.2" r="1.7" fill="#767990"/></svg>
<div class="b" style="left:0.0px;top:1712.0px;width:462.0px;height:24.0px;background:linear-gradient(to bottom, rgba(0,0,0,0), rgba(0,0,0,0.45))"></div>
<div class="b" style="left:0.0px;top:1736.0px;width:462.0px;height:2.0px;background:#3a3f50"></div>
<svg class="b" style="left:40.0px;top:1785.0px;" width="60" height="60" viewBox="0 0 60 60"><path d="M15.8 13.2 H37.2 C38.8 13.2 40.2 14.6 40.2 16.2 V30.4 C40.2 32 38.8 33.4 37.2 33.4 H22.5 L17 38 V33.4 H15.8 C14.2 33.4 12.8 32 12.8 30.4 V16.2 C12.8 14.6 14.2 13.2 15.8 13.2 Z" fill="#72758c"/><path d="M23 20 C23 17.5 25 16.8 26.5 16.8 C28.5 16.8 30 18 30 19.8 C30 22.3 26.5 22.5 26.5 25.2" fill="none" stroke="#0f1a2e" stroke-width="2.4"/><circle cx="26.3" cy="28.6" r="1.6" fill="#0f1a2e"/><path d="M43.5 22.5 H46.5 V41 H43 V44.5 L39.5 41 H25 C23.5 41 23 40 23 38.5 V36.5" fill="none" stroke="#72758c" stroke-width="2.2"/></svg>
<div class="t" style="left:105.0px;top:1796.1px;font-size:27.5px;color:#bcbed0;font-weight:400;letter-spacing:0px;font-family:'Liberation Sans', sans-serif;">Help</div>
<div class="b" style="left:50.4px;top:1898px;width:47.4px;height:47.4px;border-radius:50%;background:#76c464;border:2.5px solid #ffffff;box-sizing:border-box"></div>
<div class="t" style="left:66.5px;top:1912.4px;font-size:22px;color:#ffffff;font-weight:700;letter-spacing:0px;font-family:'Liberation Sans', sans-serif;">L</div>
<div class="t" style="left:109.0px;top:1907.7px;font-size:27.5px;color:#b7b9cc;font-weight:400;letter-spacing:0px;font-family:'Liberation Sans', sans-serif;-webkit-text-stroke:0.7px #b7b9cc">Lavakush</div>
<svg class="b" style="left:430.0px;top:1760.0px;" width="34" height="140" viewBox="430 1760 34 140"><path d="M463.7 1774.4 L441.5 1803.3 C440.3 1815 440.1 1840 441 1855.2 L463.7 1885 Z" fill="#b0b2c8"/><path d="M444.4 1829.7 L457.4 1823.5 V1836.4 Z" fill="#0f1a2e" stroke="#0f1a2e" stroke-width="1.2" stroke-linejoin="round"/></svg>
<div class="b" style="left:0.0px;top:2.0px;width:3456.0px;height:30.0px;background:linear-gradient(to bottom, rgba(0,0,0,0.22), rgba(0,0,0,0))"></div>
<div class="b" style="left:0.0px;top:0.0px;width:3456.0px;height:2.0px;background:#3d3d3f"></div>
</div><script>(function(){var w=window.innerWidth||3456;var s=w/3456;if(Math.abs(s-1)>0.01){var r=document.getElementById("root");r.style.transform="scale("+s+")";}})();</script></body></html>
